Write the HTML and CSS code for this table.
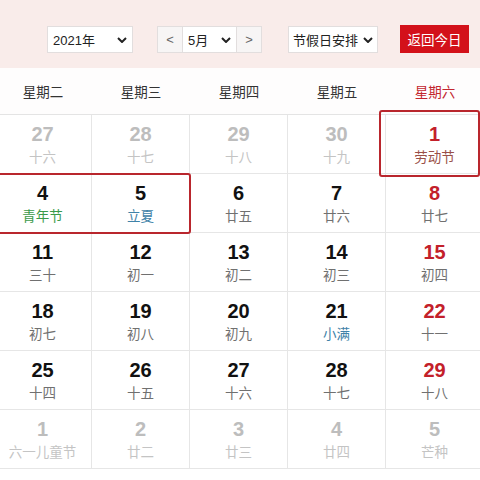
FILE: index.html
```html
<!DOCTYPE html>
<html lang="zh">
<head>
<meta charset="utf-8">
<link rel="stylesheet" href="styles.css">
</head>
<body>
<div class="page">
  <div class="toolbar">
    <div class="sel sel-year"><span>2021年</span><svg class="chev" viewBox="0 0 10 6" width="10" height="6"><path d="M1 1 L5 5 L9 1" fill="none" stroke="#222" stroke-width="2"/></svg></div>
    <div class="month-group">
      <div class="arrow">&lt;</div>
      <div class="sel sel-month"><span>5月</span><svg class="chev" viewBox="0 0 10 6" width="10" height="6"><path d="M1 1 L5 5 L9 1" fill="none" stroke="#222" stroke-width="2"/></svg></div>
      <div class="arrow">&gt;</div>
    </div>
    <div class="sel sel-holiday"><span>节假日安排</span><svg class="chev" viewBox="0 0 10 6" width="10" height="6"><path d="M1 1 L5 5 L9 1" fill="none" stroke="#222" stroke-width="2"/></svg></div>
    <div class="today-btn">返回今日</div>
  </div>
  <div class="weekdays">
    <div class="wd">星期二</div>
    <div class="wd">星期三</div>
    <div class="wd">星期四</div>
    <div class="wd">星期五</div>
    <div class="wd red">星期六</div>
  </div>
  <div class="grid">
    <div class="cell other"><div class="num">27</div><div class="lunar">十六</div></div>
    <div class="cell other"><div class="num">28</div><div class="lunar">十七</div></div>
    <div class="cell other"><div class="num">29</div><div class="lunar">十八</div></div>
    <div class="cell other"><div class="num">30</div><div class="lunar">十九</div></div>
    <div class="cell weekend"><div class="num">1</div><div class="lunar fest-red">劳动节</div></div>

    <div class="cell"><div class="num">4</div><div class="lunar fest-green">青年节</div></div>
    <div class="cell"><div class="num">5</div><div class="lunar term">立夏</div></div>
    <div class="cell"><div class="num">6</div><div class="lunar">廿五</div></div>
    <div class="cell"><div class="num">7</div><div class="lunar">廿六</div></div>
    <div class="cell weekend"><div class="num">8</div><div class="lunar">廿七</div></div>

    <div class="cell"><div class="num">11</div><div class="lunar">三十</div></div>
    <div class="cell"><div class="num">12</div><div class="lunar">初一</div></div>
    <div class="cell"><div class="num">13</div><div class="lunar">初二</div></div>
    <div class="cell"><div class="num">14</div><div class="lunar">初三</div></div>
    <div class="cell weekend"><div class="num">15</div><div class="lunar">初四</div></div>

    <div class="cell"><div class="num">18</div><div class="lunar">初七</div></div>
    <div class="cell"><div class="num">19</div><div class="lunar">初八</div></div>
    <div class="cell"><div class="num">20</div><div class="lunar">初九</div></div>
    <div class="cell"><div class="num">21</div><div class="lunar term">小满</div></div>
    <div class="cell weekend"><div class="num">22</div><div class="lunar">十一</div></div>

    <div class="cell"><div class="num">25</div><div class="lunar">十四</div></div>
    <div class="cell"><div class="num">26</div><div class="lunar">十五</div></div>
    <div class="cell"><div class="num">27</div><div class="lunar">十六</div></div>
    <div class="cell"><div class="num">28</div><div class="lunar">十七</div></div>
    <div class="cell weekend"><div class="num">29</div><div class="lunar">十八</div></div>

    <div class="cell other"><div class="num">1</div><div class="lunar">六一儿童节</div></div>
    <div class="cell other"><div class="num">2</div><div class="lunar">廿二</div></div>
    <div class="cell other"><div class="num">3</div><div class="lunar">廿三</div></div>
    <div class="cell other"><div class="num">4</div><div class="lunar">廿四</div></div>
    <div class="cell other"><div class="num">5</div><div class="lunar">芒种</div></div>
  </div>
  <div class="mark mark-one"></div>
  <div class="mark mark-two"></div>
</div>
</body>
</html>
```

FILE: styles.css
```css
html, body {
  margin: 0;
  padding: 0;
  background: #ffffff;
}
.page {
  position: relative;
  width: 480px;
  height: 480px;
  overflow: hidden;
  font-family: "Liberation Sans", "Noto Sans CJK SC", sans-serif;
  color: #222;
}
.toolbar {
  height: 68px;
  background: #f9ecea;
  display: flex;
  align-items: flex-start;
  padding-left: 47px;
  padding-top: 26px;
  box-sizing: border-box;
  font-size: 13px;
}
.sel {
  height: 27px;
  box-sizing: border-box;
  background: #fff;
  border: 1px solid #e2dede;
  display: flex;
  align-items: center;
  justify-content: space-between;
  padding: 0 5px 0 5px;
  color: #222;
  white-space: nowrap;
}
.sel-year { width: 86px; }
.sel-month { width: 53px; border-left: none; border-right: none; }
.sel-holiday { width: 90px; margin-left: 26px; padding: 0 4px 0 4px; font-size: 13px; }
.month-group {
  display: flex;
  margin-left: 24px;
}
.arrow {
  width: 26px;
  height: 27px;
  box-sizing: border-box;
  border: 1px solid #e2dede;
  background: #f7f5f5;
  color: #666;
  display: flex;
  align-items: center;
  justify-content: center;
  font-size: 13px;
}
.chev { display: block; flex: none; }
.today-btn {
  margin-left: 22px;
  margin-top: -1px;
  width: 69px;
  height: 28px;
  background: #d3111a;
  color: #fff;
  font-size: 13.5px;
  display: flex;
  align-items: center;
  justify-content: center;
}
.weekdays {
  display: grid;
  grid-template-columns: repeat(5, 98px);
  margin-left: -6px;
  height: 46px;
  border-bottom: 1px solid #e4e4e4;
  background: #fefdfd;
}
.wd {
  display: flex;
  align-items: center;
  justify-content: center;
  font-size: 13.5px;
  color: #333;
  padding-bottom: 1px;
}
.wd.red { color: #c3272f; }
.grid {
  display: grid;
  grid-template-columns: repeat(5, 98px);
  grid-auto-rows: 59px;
  margin-left: -6px;
}
.cell {
  border-right: 1px solid #e6e6e6;
  border-bottom: 1px solid #e6e6e6;
  box-sizing: border-box;
  text-align: center;
  padding-top: 8px;
}
.num {
  font-size: 20px;
  font-weight: bold;
  line-height: 22px;
  color: #111;
}
.lunar {
  margin-top: 5px;
  font-size: 13.5px;
  line-height: 16px;
  color: #707070;
}
.weekend .num { color: #c3202a; }
.other .num { color: #bdbdbd; }
.other .lunar { color: #c4c4c4; }
.fest-red { color: #9a4f48; }
.fest-green { color: #3b9a4a; }
.term { color: #3f82a8; }
.mark {
  position: absolute;
  border: 2px solid #b9262d;
  border-radius: 3px;
  box-sizing: border-box;
}
.mark-one {
  left: 379px;
  top: 110px;
  width: 101px;
  height: 67px;
}
.mark-two {
  left: -10px;
  top: 173px;
  width: 201px;
  height: 61px;
}
```
